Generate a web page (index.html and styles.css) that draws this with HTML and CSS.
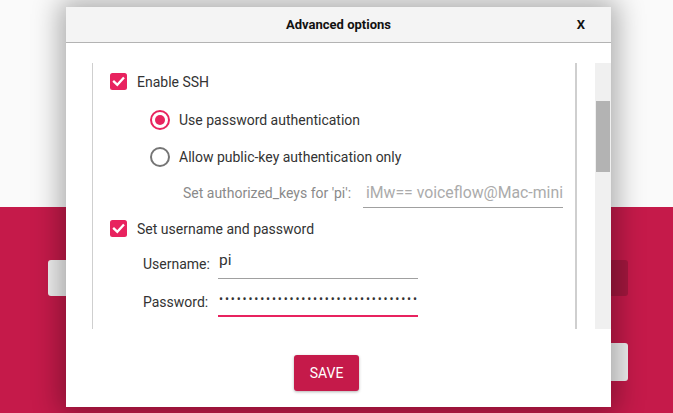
FILE: index.html
```html
<!DOCTYPE html>
<html>
<head>
<meta charset="utf-8">
<link rel="stylesheet" href="styles.css">
</head>
<body>
<div class="app">
  <div class="app-top"></div>
  <div class="app-bottom">
    <div class="btn-row">
      <div class="bg-btn light"></div>
      <div></div>
      <div class="bg-btn dark"></div>
    </div>
    <div class="btn-row second">
      <div></div>
      <div></div>
      <div class="bg-btn light"></div>
    </div>
  </div>
</div>

<div class="dialog">
  <div class="dlg-header">
    <span></span>
    <span class="dlg-title">Advanced options</span>
    <span class="dlg-close">X</span>
  </div>
  <div class="dlg-body">
    <div class="frame">
      <div class="row r1">
        <svg class="cb" width="17" height="17" viewBox="0 0 17 17"><rect x="0" y="0" width="17" height="17" rx="2.5" fill="#e8235f"/><path d="M4 8.6 L7.3 11.8 L13.2 5.4" fill="none" stroke="#fff" stroke-width="2.3" stroke-linecap="square"/></svg>
        <span class="lbl">Enable SSH</span>
      </div>
      <div class="row r2 radio-row">
        <svg class="rb" width="20" height="20" viewBox="0 0 20 20"><circle cx="10" cy="10" r="9" fill="none" stroke="#e8235f" stroke-width="2"/><circle cx="10" cy="10" r="5" fill="#e8235f"/></svg>
        <span class="lbl">Use password authentication</span>
      </div>
      <div class="row r3 radio-row">
        <svg class="rb" width="20" height="20" viewBox="0 0 20 20"><circle cx="10" cy="10" r="9" fill="none" stroke="#757575" stroke-width="2"/></svg>
        <span class="lbl">Allow public-key authentication only</span>
      </div>
      <div class="row r4 keys-row">
        <span class="sublbl">Set authorized_keys for 'pi':</span>
        <div class="field keys"><span>iMw== voiceflow@Mac-mini</span></div>
      </div>
      <div class="row r5">
        <svg class="cb" width="17" height="17" viewBox="0 0 17 17"><rect x="0" y="0" width="17" height="17" rx="2.5" fill="#e8235f"/><path d="M4 8.6 L7.3 11.8 L13.2 5.4" fill="none" stroke="#fff" stroke-width="2.3" stroke-linecap="square"/></svg>
        <span class="lbl">Set username and password</span>
      </div>
      <div class="row r6 cred-row">
        <span class="credlbl">Username:</span>
        <div class="field user"><span>pi</span></div>
      </div>
      <div class="row r7 cred-row">
        <span class="credlbl">Password:</span>
        <div class="field pass"><span class="dots">••••••••••••••••••••••••••••••••••</span></div>
      </div>
      <div class="row r8">
        <svg class="cb" width="17" height="17" viewBox="0 0 17 17"><rect x="0" y="0" width="17" height="17" rx="2.5" fill="#f6c6d6"/></svg>
      </div>
    </div>
    <div class="scrollbar"><div class="thumb"></div></div>
  </div>
  <div class="dlg-footer">
    <div class="save">SAVE</div>
  </div>
</div>
</body>
</html>
```

FILE: styles.css
```css
html, body {
  margin: 0;
  padding: 0;
}
body {
  width: 673px;
  height: 413px;
  overflow: hidden;
  font-family: Roboto, "Liberation Sans", sans-serif;
  position: relative;
}
.app {
  display: flex;
  flex-direction: column;
  height: 413px;
}
.app-top {
  height: 207px;
  background: #fafafa;
}
.app-bottom {
  flex: 1;
  background: #c51a4a;
  padding: 53px 45px 0 48px;
  display: flex;
  flex-direction: column;
  gap: 47px;
}
.btn-row {
  display: grid;
  grid-template-columns: 1fr 1fr 1fr;
  gap: 40px;
  height: 36px;
}
.btn-row.second {
  height: 38px;
}
.bg-btn {
  border-radius: 3px;
}
.bg-btn.light {
  background: #f0f0f0;
}
.bg-btn.dark {
  background: #a3173e;
}

.dialog {
  position: absolute;
  left: 66px;
  top: 7px;
  width: 545px;
  height: 400px;
  background: #fff;
  box-shadow: 0 0 26px 6px rgba(0, 0, 0, 0.32);
  display: flex;
  flex-direction: column;
}
.dlg-header {
  height: 35px;
  background: #f4f4f4;
  border-bottom: 1px solid #b3b3b3;
  display: grid;
  grid-template-columns: 1fr auto 1fr;
  align-items: center;
  font-weight: bold;
  font-size: 13px;
  color: #111;
}
.dlg-title {
  text-align: center;
}
.dlg-close {
  justify-self: end;
  padding-right: 26px;
  font-size: 13px;
}
.dlg-body {
  margin-top: 20px;
  height: 266px;
  display: flex;
  padding-left: 26px;
}
.frame {
  width: 481px;
  border-left: 1px solid #cfcfcf;
  border-right: 2px solid #cfcfcf;
  overflow: hidden;
  padding-left: 17px;
  box-sizing: content-box;
}
.scrollbar {
  margin-left: 18px;
  width: 16px;
  background: #f0f0f0;
  padding: 38px 1px 0 1px;
  box-sizing: border-box;
}
.thumb {
  height: 71px;
  background: #b3b3b3;
}
.row {
  display: flex;
  align-items: center;
  color: #333;
}
.lbl {
  font-size: 14px;
  color: #333;
}
.cb {
  flex: none;
  margin-right: 10px;
}
.rb {
  flex: none;
  margin-right: 9px;
}
.r1 { height: 37px; }
.r2 { height: 40px; }
.r3 { height: 34px; }
.r4 { height: 38px; }
.r5 { height: 33px; }
.r6 { height: 38px; }
.r7 { height: 37px; }
.r8 { height: 20px; margin-top: 9px; align-items: flex-start; }
.radio-row {
  padding-left: 40px;
}
.keys-row {
  padding-left: 73px;
}
.sublbl {
  width: 180px;
  flex: none;
  font-size: 14px;
  color: #8a8a8a;
  white-space: nowrap;
}
.field {
  width: 200px;
  height: 29px;
  border-bottom: 1px solid #a0a0a0;
  display: flex;
  align-items: center;
  white-space: nowrap;
  font-size: 15.5px;
  box-sizing: content-box;
}
.field.keys {
  color: #ababab;
  justify-content: flex-end;
  font-size: 15.8px;
}
.cred-row {
  padding-left: 33px;
}
.credlbl {
  width: 75px;
  font-size: 14px;
  color: #333;
}
.field.user {
  color: #333;
  padding-left: 1px;
  width: 199px;
}
.field.user span {
  margin-top: -8px;
}
.field.pass {
  border-bottom: 2px solid #e8235f;
  height: 28px;
  padding-left: 1px;
  width: 199px;
}
.dots {
  font-size: 12px;
  letter-spacing: 1.83px;
  color: #333;
  margin-top: -3px;
}
.dlg-footer {
  flex: 1;
  padding: 26px 0 0 228px;
}
.save {
  width: 65px;
  height: 36px;
  background: #c51a4a;
  color: #fff;
  font-size: 14px;
  border-radius: 3px;
  display: flex;
  align-items: center;
  justify-content: center;
  box-shadow: 0 1px 3px rgba(0, 0, 0, 0.3);
}
```
